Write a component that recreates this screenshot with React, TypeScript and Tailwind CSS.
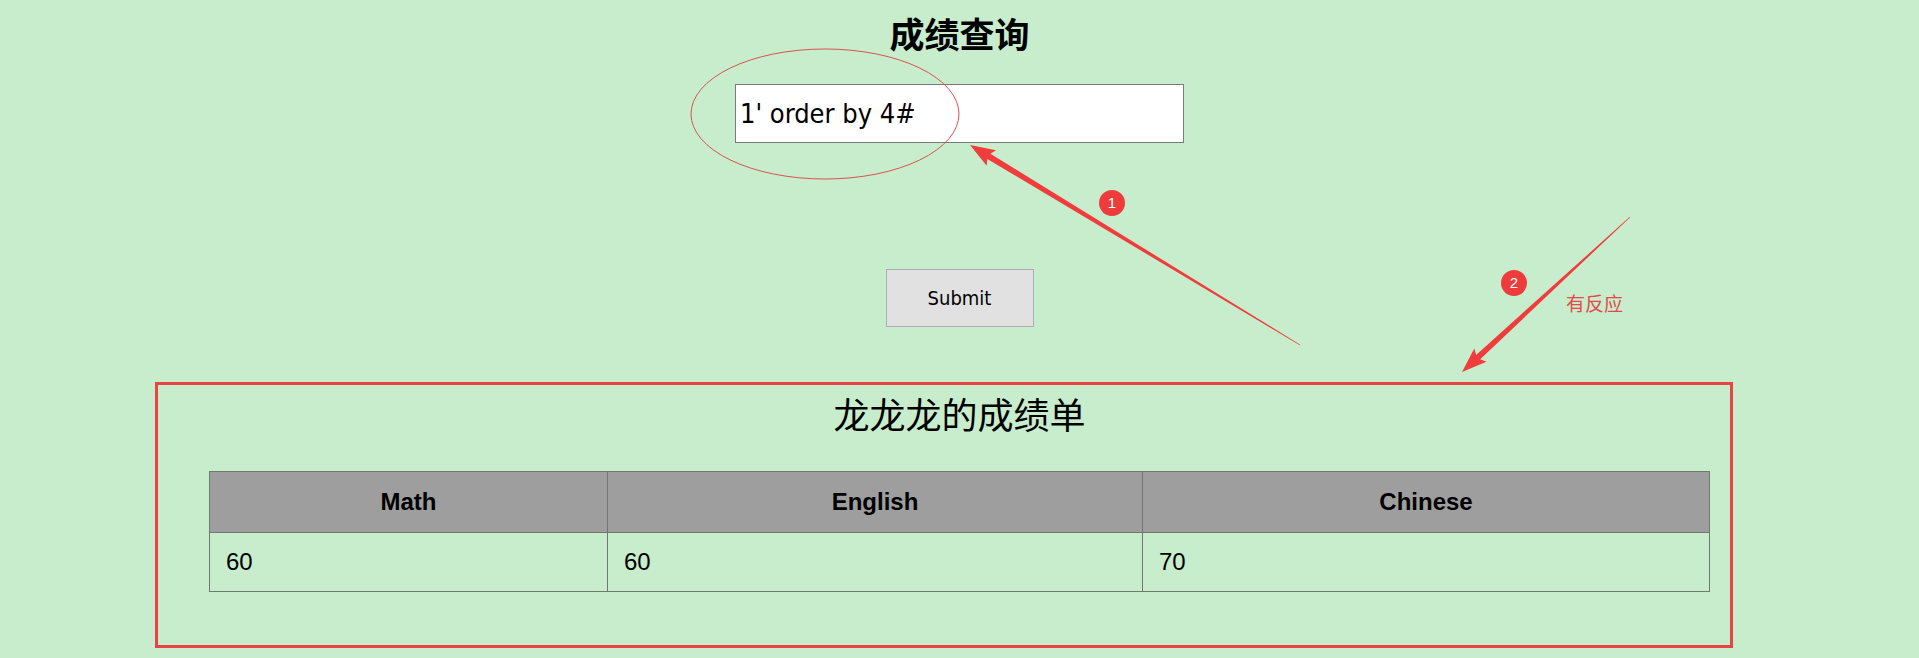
type Pt = [number, number];

// tapered annotation arrow: thin tail, thick shaft near the head, filled arrowhead
function arrowPoints(tail: Pt, tip: Pt, wt = 0.6, wh = 6, hl = 22, hw = 9) {
  const dx = tip[0] - tail[0];
  const dy = tip[1] - tail[1];
  const len = Math.hypot(dx, dy);
  const ux = dx / len;
  const uy = dy / len;
  const nx = -uy;
  const ny = ux;
  const bx = tip[0] - ux * hl;
  const by = tip[1] - uy * hl;
  const pts: Pt[] = [
    [tail[0] + (nx * wt) / 2, tail[1] + (ny * wt) / 2],
    [bx + (nx * wh) / 2, by + (ny * wh) / 2],
    [bx + nx * hw - ux * 3, by + ny * hw - uy * 3],
    tip,
    [bx - nx * hw - ux * 3, by - ny * hw - uy * 3],
    [bx - (nx * wh) / 2, by - (ny * wh) / 2],
    [tail[0] - (nx * wt) / 2, tail[1] - (ny * wt) / 2],
  ];
  return pts.map((p) => `${p[0].toFixed(1)},${p[1].toFixed(1)}`).join(" ");
}

const scores = [
  { subject: "Math", score: 60, width: "w-[398px]" },
  { subject: "English", score: 60, width: "w-[535px]" },
  { subject: "Chinese", score: 70, width: "w-[567px]" },
];

function Annotations() {
  return (
    <>
      <svg
        className="pointer-events-none absolute left-0 top-0"
        width="1919"
        height="658"
        viewBox="0 0 1919 658"
      >
        <ellipse cx="825" cy="114" rx="134" ry="65" fill="none" stroke="#d9534f" strokeWidth="1" />
        <polygon points={arrowPoints([1300, 345], [970, 145])} fill="#f03c3c" />
        <polygon points={arrowPoints([1630, 217], [1462, 372])} fill="#f03c3c" />
      </svg>

      {/* box drawn around the result */}
      <div className="pointer-events-none absolute left-[155px] top-[382px] h-[266px] w-[1578px] border-[3px] border-[#e84444]" />

      <div className="absolute left-[1099px] top-[190px] flex h-[26px] w-[26px] items-center justify-center rounded-full bg-[#ee3b3b] text-[15px] text-white">
        1
      </div>
      <div className="absolute left-[1501px] top-[270px] flex h-[26px] w-[26px] items-center justify-center rounded-full bg-[#ee3b3b] text-[15px] text-white">
        2
      </div>
      <div className="absolute left-[1566px] top-[293px] text-[19px] leading-6 text-[#e5484a]">
        有反应
      </div>
    </>
  );
}

export default function App() {
  return (
    <div
      className="relative min-h-[658px] w-full overflow-hidden bg-[#c7edcc] text-black"
      style={{ fontFamily: '"Liberation Sans", "Noto Sans CJK SC", sans-serif' }}
    >
      <div className="flex flex-col items-center">
        <h1
          className="pt-[13px] text-[35px] font-bold leading-[40px]"
          style={{ fontFamily: '"Noto Sans CJK SC", sans-serif' }}
        >
          成绩查询
        </h1>

        <input
          type="text"
          defaultValue="1' order by 4#"
          className="mt-[31px] h-[59px] w-[449px] border border-[#7a7a7a] bg-white pl-[4px] text-[27px] text-black outline-none"
          style={{ fontFamily: '"DejaVu Sans Condensed", "DejaVu Sans", sans-serif' }}
        />

        <button
          className="mt-[126px] h-[58px] w-[148px] border border-[#adadad] bg-[#e1e1e1] text-[20px] text-black"
          style={{ fontFamily: '"DejaVu Sans Condensed", "DejaVu Sans", sans-serif' }}
        >
          Submit
        </button>

        <h2
          className="mt-[64px] text-[36px] font-normal leading-[44px]"
          style={{ fontFamily: '"Noto Sans CJK SC", sans-serif' }}
        >
          龙龙龙的成绩单
        </h2>

        <table className="mt-[36px] border-collapse text-[24px]">
          <thead>
            <tr className="bg-[#9e9e9e]">
              {scores.map((s) => (
                <th key={s.subject} className={`${s.width} h-[61px] border border-[#6f7a6f] font-bold`}>
                  {s.subject}
                </th>
              ))}
            </tr>
          </thead>
          <tbody>
            <tr>
              {scores.map((s) => (
                <td key={s.subject} className="h-[59px] border border-[#6f7a6f] pl-4 text-left">
                  {s.score}
                </td>
              ))}
            </tr>
          </tbody>
        </table>
      </div>

      <Annotations />
    </div>
  );
}
